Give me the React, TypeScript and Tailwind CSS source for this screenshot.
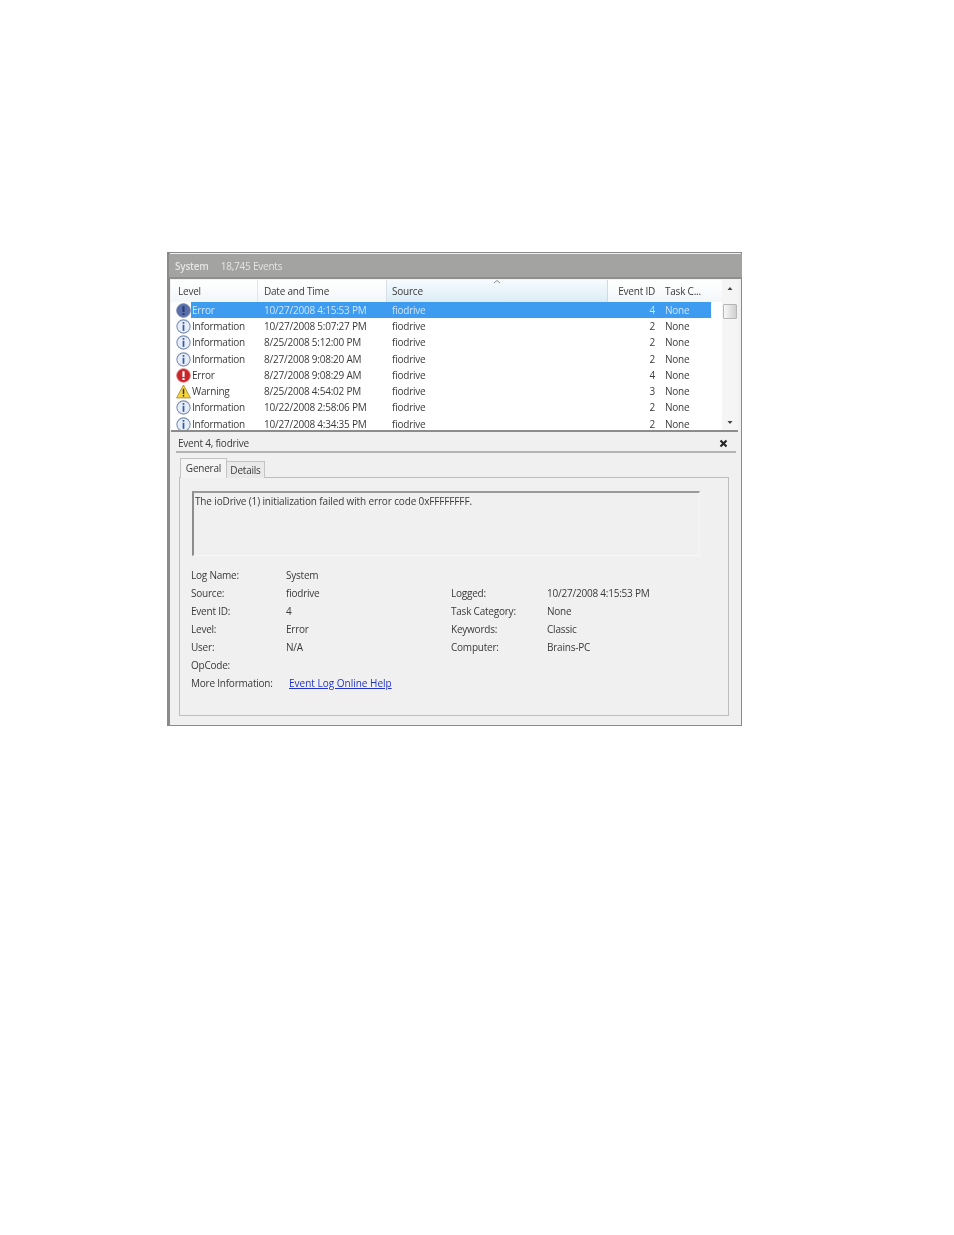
import React from 'react';

type Level = 'Error' | 'Information' | 'Warning';

const rows: { level: Level; date: string; id: string }[] = [
    { level: 'Error', date: '10/27/2008 4:15:53 PM', id: '4' },
    { level: 'Information', date: '10/27/2008 5:07:27 PM', id: '2' },
    { level: 'Information', date: '8/25/2008 5:12:00 PM', id: '2' },
    { level: 'Information', date: '8/27/2008 9:08:20 AM', id: '2' },
    { level: 'Error', date: '8/27/2008 9:08:29 AM', id: '4' },
    { level: 'Warning', date: '8/25/2008 4:54:02 PM', id: '3' },
    { level: 'Information', date: '10/22/2008 2:58:06 PM', id: '2' },
    { level: 'Information', date: '10/27/2008 4:34:35 PM', id: '2' },
];

const LevelIcon: React.FC<{ level: Level; selected?: boolean }> = ({ level, selected }) => {
    if (level === 'Warning') {
        return (
            <svg width="15" height="15" viewBox="0 0 14 14" className="shrink-0">
                <path d="M7 1 L13.5 13 H0.5 Z" fill="#f5d63d" stroke="#a88a2a" strokeWidth="0.8" />
                <rect x="6.3" y="4.5" width="1.4" height="5" fill="#333" />
                <rect x="6.3" y="10.3" width="1.4" height="1.4" fill="#333" />
            </svg>
        );
    }
    if (level === 'Error') {
        return (
            <svg width="15" height="15" viewBox="0 0 14 14" className="shrink-0">
                <circle cx="7" cy="7" r="6.4" fill={selected ? '#5a6fa8' : '#c9262c'} stroke={selected ? '#6d7fb0' : '#d98080'} strokeWidth="0.8" />
                <rect x="6" y="3" width="2" height="5.4" fill={selected ? '#2c3c78' : '#fff'} />
                <rect x="6" y="9.4" width="2" height="1.8" fill={selected ? '#2c3c78' : '#fff'} />
            </svg>
        );
    }
    return (
        <svg width="15" height="15" viewBox="0 0 14 14" className="shrink-0">
            <circle cx="7" cy="7" r="6.2" fill="#e8eef8" stroke="#7d8fb5" strokeWidth="1" />
            <rect x="6.2" y="2.8" width="1.6" height="1.6" fill="#3558a8" />
            <rect x="6.2" y="5.4" width="1.6" height="5.6" fill="#3558a8" />
        </svg>
    );
};

const Field: React.FC<{ children?: React.ReactNode }> = ({ children }) => <div className="h-[18px] leading-[18px] whitespace-nowrap">{children}</div>;

export default function App() {
    return (
        <div className="w-[954px] h-[1235px] bg-white pt-[252px] pl-[167px] font-['Open_Sans',sans-serif] text-[10px] tracking-[-0.22px] text-[#3a3a3a]">
            <div className="w-[575px] h-[474px] flex flex-col border border-[#8a8a8a] border-l-[3px] bg-[#f0f0f0] blur-[0.5px]">
                <div className="h-[25px] shrink-0 mt-[1px] mx-[-1px] bg-[#a3a3a1] border-b-2 border-[#8f8f8d] flex items-center gap-3 pl-[6px] pt-[1px] text-[#e4e4e2]">
                    <span className="font-semibold">System</span>
                    <span>18,745 Events</span>
                </div>

                <div className="mt-[1px] ml-[1px] mr-[3px] h-[152px] shrink-0 bg-white border-b-2 border-[#8c8c8c] flex overflow-hidden">
                    <div className="flex-1 min-w-0 overflow-hidden">
                        <div className="relative h-[22px] flex items-center bg-gradient-to-b from-white to-[#f3f7fa] text-[#3a3a3a]">
                            <div className="w-[87px] pl-[7px] border-r border-[#e2e6ea] h-full flex items-center">Level</div>
                            <div className="w-[129px] pl-[6px] border-r border-[#d8e0e6] h-full flex items-center">Date and Time</div>
                            <div className="w-[221px] pl-[5px] h-full flex items-center bg-gradient-to-b from-[#f6fbfe] to-[#dcedf6] border-r border-[#cfdbe3]">Source</div>
                            <div className="w-[47px] text-right">Event ID</div>
                            <div className="pl-[10px] whitespace-nowrap">Task C...</div>
                            <svg width="6" height="4" viewBox="0 0 6 4" className="absolute left-[323px] top-0">
                                <path d="M0 3 L3 0.5 L6 3" fill="none" stroke="#8a8a8a" strokeWidth="1" />
                            </svg>
                        </div>
                        {rows.map((row, i) => {
                            const selected = i === 0;
                            return (
                                <div key={i} className={`h-[16.3px] flex items-center ${selected ? 'text-[#cfe6fb]' : ''}`}>
                                    <div className="w-[20px] pl-[5px] shrink-0"><LevelIcon level={row.level} selected={selected} /></div>
                                    <div className={`flex h-full items-center pl-[1px] ${selected ? 'bg-[#3d9bf0]' : ''} w-[520px]`}>
                                        <div className="w-[72px] whitespace-nowrap">{row.level}</div>
                                        <div className="w-[128px] whitespace-nowrap">{row.date}</div>
                                        <div className="w-[209px]">fiodrive</div>
                                        <div className="w-[54px] text-right">{row.id}</div>
                                        <div className="pl-[10px]">None</div>
                                    </div>
                                </div>
                            );
                        })}
                    </div>
                    <div className="w-[16px] shrink-0 bg-[#f5f5f5] flex flex-col items-center">
                        <svg width="8" height="16" viewBox="0 0 8 16" className="shrink-0 mt-[1px]">
                            <path d="M1.5 9 L4 6 L6.5 9 Z" fill="#444" />
                        </svg>
                        <div className="w-[14px] h-[15px] mt-[7px] rounded-[1px] border border-[#b5b5b5] bg-gradient-to-r from-[#f8f8f8] to-[#cfcfcf]" />
                        <svg width="8" height="16" viewBox="0 0 8 16" className="shrink-0 mt-auto">
                            <path d="M1.5 7 L4 10 L6.5 7 Z" fill="#444" />
                        </svg>
                    </div>
                </div>

                <div className="flex-1 min-h-0 flex flex-col pl-[9px] pr-[5px]">
                    <div className="h-[21px] shrink-0 flex items-center justify-between border-b-2 border-[#b4b4b4] pr-[8px] -ml-[3px] pl-[2px] pt-[3px] text-[#3a3a3a]">
                        <span>Event 4, fiodrive</span>
                        <svg width="9" height="9" viewBox="0 0 9 9"><path d="M1.5 1.5 L7.5 7.5 M7.5 1.5 L1.5 7.5" stroke="#222" strokeWidth="2" /></svg>
                    </div>
                    <div className="flex items-end h-[25px] shrink-0 pl-[1px] relative z-10">
                        <div className="w-[47px] h-[20px] bg-[#f4f4f4] border border-b-0 border-[#c4c4c4] flex items-center justify-center pb-[1px]">General</div>
                        <div className="w-[38px] h-[17px] bg-[#e9e9e9] border border-b-0 border-l-0 border-[#c4c4c4] flex items-center justify-center">Details</div>
                    </div>
                    <div className="h-[239px] -mt-[1px] mr-[7px] border border-[#bdbdbd] bg-[#f0f0f0] pl-[11px]">
                        <div className="mt-[13px] w-[508px] h-[65px] ml-[1px] border-t-2 border-l-2 border-[#8d8d8d] border-t-[#9a9a9a] border-r border-b border-r-[#f5f5f5] border-b-[#f7f7f7] pl-[1px] pt-[1px] leading-[15px] tracking-[-0.14px]">
                            The ioDrive (1) initialization failed with error code 0xFFFFFFFF.
                        </div>
                        <div className="mt-[10px] grid grid-cols-[95px_165px_96px_1fr]">
                            <Field>Log Name:</Field><Field>System</Field><Field /><Field />
                            <Field>Source:</Field><Field>fiodrive</Field><Field>Logged:</Field><Field>10/27/2008 4:15:53 PM</Field>
                            <Field>Event ID:</Field><Field>4</Field><Field>Task Category:</Field><Field>None</Field>
                            <Field>Level:</Field><Field>Error</Field><Field>Keywords:</Field><Field>Classic</Field>
                            <Field>User:</Field><Field>N/A</Field><Field>Computer:</Field><Field>Brains-PC</Field>
                            <Field>OpCode:</Field><Field /><Field /><Field />
                            <Field>More Information:</Field>
                            <Field><a href="#" className="ml-[3px] text-[#2233c4] underline tracking-normal">Event Log Online Help</a></Field>
                        </div>
                    </div>
                </div>
            </div>
        </div>
    );
}
